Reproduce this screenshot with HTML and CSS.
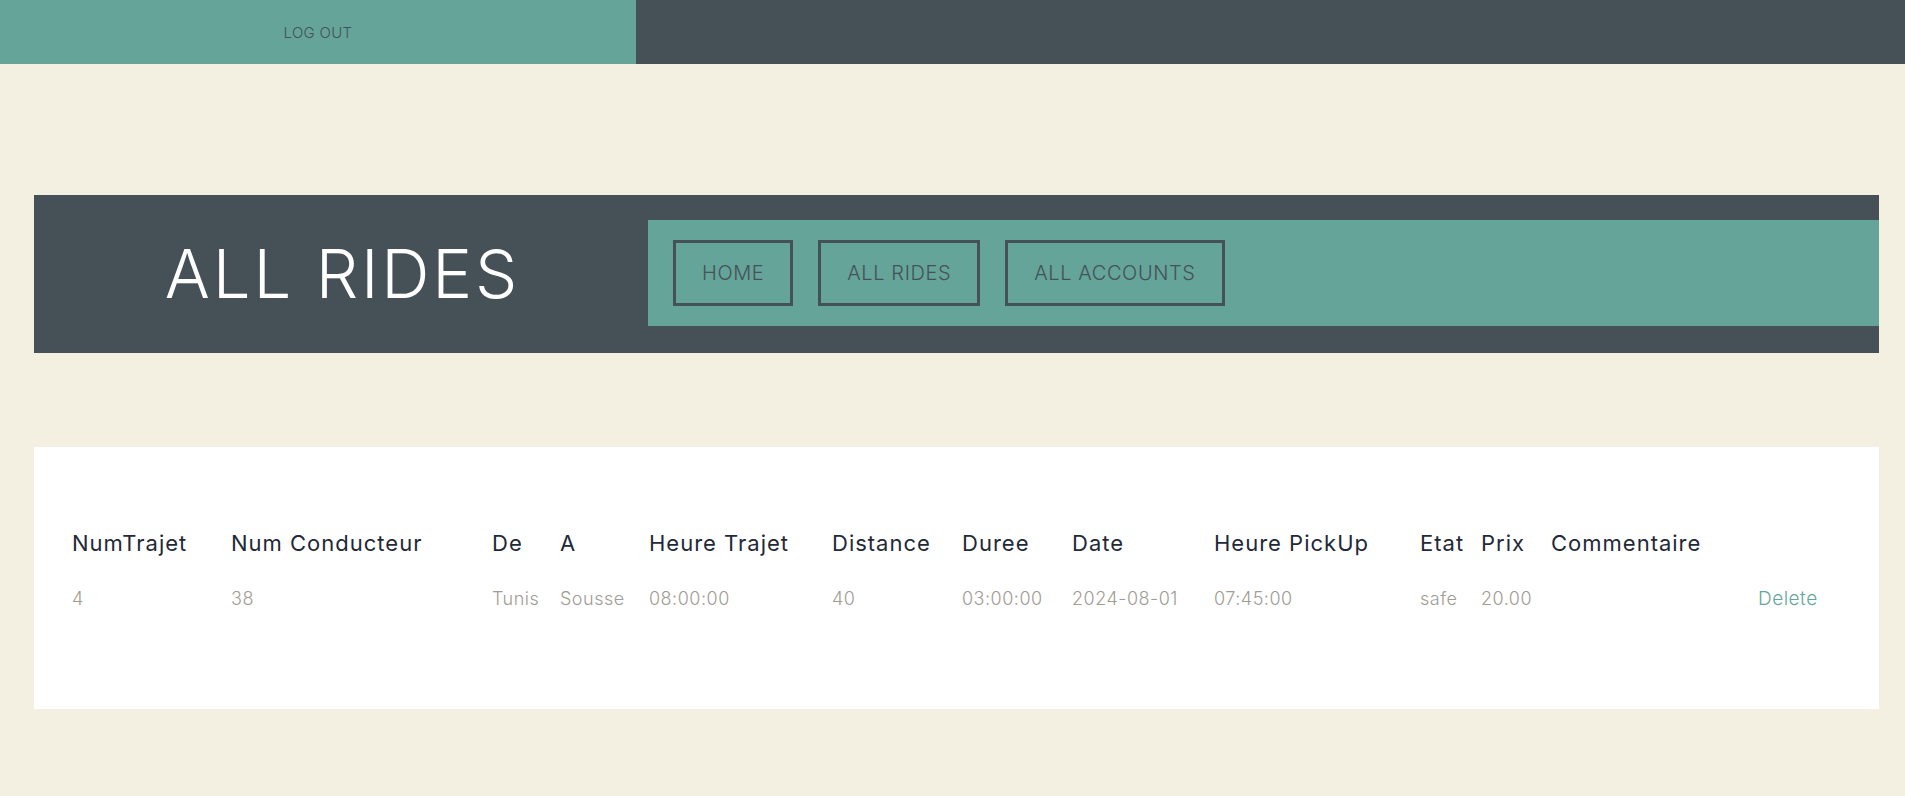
FILE: index.html
```html
<!DOCTYPE html>
<html lang="fr">
<head>
<meta charset="utf-8">
<title>All Rides</title>
<link rel="stylesheet" href="styles.css">
</head>
<body>
<header class="topbar">
  <a class="logout" href="#">LOG OUT</a>
  <div class="topbar-rest"></div>
</header>

<main class="page">
  <section class="banner">
    <div class="banner-title">
      <h1>ALL RIDES</h1>
    </div>
    <nav class="banner-nav">
      <a class="nav-btn" href="#">HOME</a>
      <a class="nav-btn" href="#">ALL RIDES</a>
      <a class="nav-btn" href="#">ALL ACCOUNTS</a>
    </nav>
  </section>

  <section class="card">
    <table class="rides">
      <colgroup>
        <col class="c-num"><col class="c-cond"><col class="c-de"><col class="c-a">
        <col class="c-heure"><col class="c-dist"><col class="c-duree"><col class="c-date">
        <col class="c-pickup"><col class="c-etat"><col class="c-prix"><col class="c-comm">
        <col class="c-act">
      </colgroup>
      <thead>
        <tr>
          <th>NumTrajet</th>
          <th>Num Conducteur</th>
          <th>De</th>
          <th>A</th>
          <th>Heure Trajet</th>
          <th>Distance</th>
          <th>Duree</th>
          <th>Date</th>
          <th>Heure PickUp</th>
          <th>Etat</th>
          <th>Prix</th>
          <th>Commentaire</th>
          <th></th>
        </tr>
      </thead>
      <tbody>
        <tr>
          <td>4</td>
          <td>38</td>
          <td>Tunis</td>
          <td>Sousse</td>
          <td>08:00:00</td>
          <td>40</td>
          <td>03:00:00</td>
          <td>2024-08-01</td>
          <td>07:45:00</td>
          <td>safe</td>
          <td>20.00</td>
          <td></td>
          <td><a class="delete" href="#">Delete</a></td>
        </tr>
      </tbody>
    </table>
  </section>
</main>
</body>
</html>
```

FILE: styles.css
```css
* { box-sizing: border-box; }

html, body {
  margin: 0;
  padding: 0;
}

body {
  background: #f3f0e1;
  font-family: "Inter", "Open Sans", sans-serif;
  color: #465157;
  min-height: 796px;
}

a { text-decoration: none; }

/* top bar */
.topbar {
  display: flex;
  height: 64px;
  background: #465157;
}

.logout {
  flex: 0 0 636px;
  background: #64a499;
  color: #465157;
  display: flex;
  align-items: center;
  justify-content: center;
  font-size: 15px;
  font-weight: 300;
  letter-spacing: 0.3px;
}

.topbar-rest { flex: 1; }

/* page */
.page {
  padding: 131px 26px 0 34px;
}

/* banner */
.banner {
  display: flex;
  align-items: center;
  background: #465157;
  height: 158px;
  padding: 25px 0 27px;
}

.banner-title {
  width: 614px;
  display: flex;
  justify-content: center;
}

.banner-title h1 {
  margin: 0;
  color: #ffffff;
  font-size: 67px;
  font-weight: 300;
  letter-spacing: 2.8px;
  line-height: 1;
  padding-left: 3px;
}

.banner-nav {
  flex: 1;
  align-self: stretch;
  background: #64a499;
  display: flex;
  align-items: center;
  gap: 25px;
  padding: 0 25px;
}

.nav-btn {
  display: block;
  height: 66px;
  line-height: 60px;
  padding: 0 26px;
  border: 3px solid #465157;
  color: #465157;
  font-size: 20px;
  font-weight: 300;
  letter-spacing: 0.6px;
}

/* card + table */
.card {
  margin-top: 94px;
  background: #ffffff;
  height: 262px;
  padding: 81px 38px 0 38px;
}

.rides {
  width: 100%;
  table-layout: fixed;
  border-collapse: collapse;
}

.rides th,
.rides td {
  padding: 0;
  text-align: left;
  white-space: nowrap;
  line-height: 30px;
}

.rides th {
  font-size: 22px;
  font-weight: 400;
  letter-spacing: 1px;
  color: #1f2937;
}

.rides td {
  padding-top: 26px;
  font-size: 18px;
  font-weight: 300;
  letter-spacing: 0.5px;
  color: #a19c94;
}

.delete {
  color: #64a69b;
  font-size: 19px;
}

.c-num { width: 159px; }
.c-cond { width: 261px; }
.c-de { width: 68px; }
.c-a { width: 89px; }
.c-heure { width: 183px; }
.c-dist { width: 130px; }
.c-duree { width: 110px; }
.c-date { width: 142px; }
.c-pickup { width: 206px; }
.c-etat { width: 61px; }
.c-prix { width: 70px; }
.c-comm { width: 207px; }
.c-act { width: 83px; }
```
